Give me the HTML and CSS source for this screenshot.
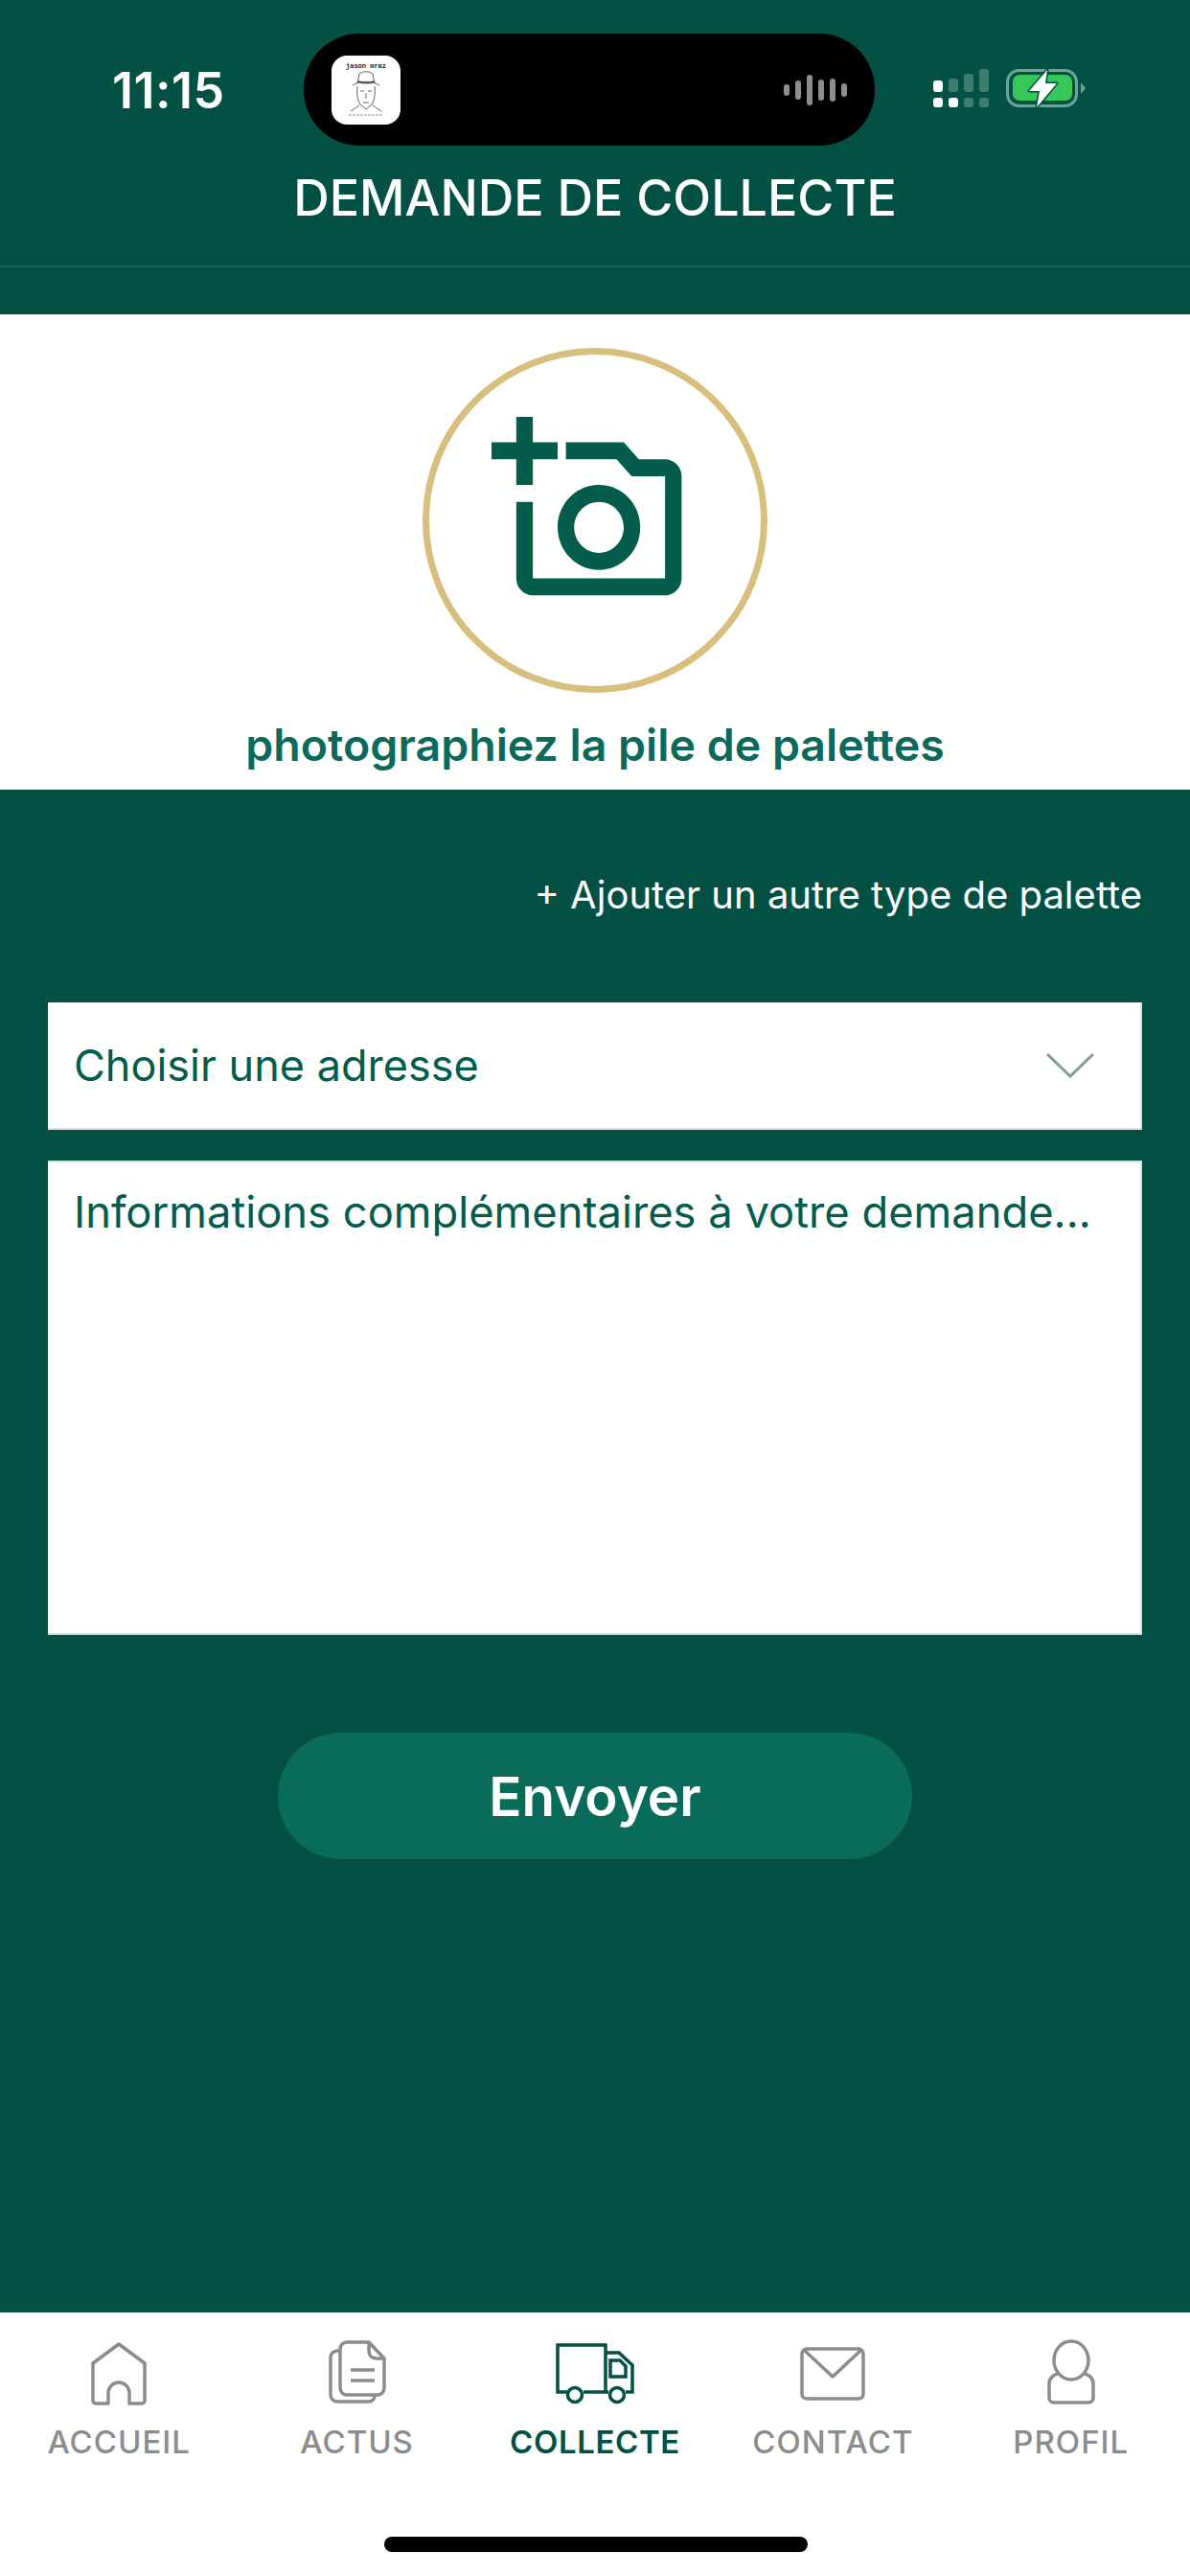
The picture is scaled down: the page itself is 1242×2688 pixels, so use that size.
FILE: index.html
```html
<!DOCTYPE html>
<html lang="fr">
<head>
    <meta charset="UTF-8">
    <meta name="viewport" content="width=device-width, initial-scale=1.0">
    <title>Demande de collecte</title>
    <link rel="stylesheet" href="styles.css">
</head>
<body>
    <div class="screen">
        <header class="top">
            <div class="status">
                <span class="time">11:15</span>
                <div class="island">
                    <div class="app-thumb">
                        <svg width="72" height="72" viewBox="0 0 72 72" fill="none" stroke="#555" stroke-width="0.9">
                            <text class="thumb-title" x="36" y="13" text-anchor="middle">jason mraz</text>
                            <path d="M27 29l2-10c4-3 10-3 14 0l2 10"/>
                            <path d="M22 31c8-5 20-5 28 0"/>
                            <path d="M27 27c6 2 12 2 18 0" stroke-width="2"/>
                            <path d="M27 32c-1 8 0 14 3 19l6 5 6-5c3-5 4-11 3-19"/>
                            <path d="M30 37h4M38 37h4M36 39v6M33 49h6"/>
                            <path d="M20 58l9-6M52 58l-9-6"/>
                            <path d="M18 62h36" stroke="#bbb" stroke-width="1.5" stroke-dasharray="3 1"/>
                        </svg>
                    </div>
                    <svg class="wave" width="66" height="32" viewBox="0 0 66 32">
                        <rect x="0" y="10" width="6" height="12" rx="3"/>
                        <rect x="12" y="6" width="6" height="20" rx="3"/>
                        <rect x="24" y="0" width="6" height="32" rx="3"/>
                        <rect x="36" y="5" width="6" height="22" rx="3"/>
                        <rect x="48" y="4" width="6" height="24" rx="3"/>
                        <rect x="60" y="9" width="6" height="14" rx="3"/>
                    </svg>
                </div>
                <div class="status-icons">
                    <svg width="58" height="40" viewBox="0 0 58 40">
                        <rect x="0" y="12" width="10" height="12" rx="3" fill="#fff"/>
                        <rect x="0" y="30" width="10" height="10" rx="3" fill="#fff"/>
                        <rect x="16" y="30" width="10" height="10" rx="3" fill="#fff"/>
                        <rect x="16" y="10" width="10" height="14" rx="3" fill="#3d7d6f"/>
                        <rect x="32" y="5" width="10" height="19" rx="3" fill="#3d7d6f"/>
                        <rect x="32" y="30" width="10" height="10" rx="3" fill="#3d7d6f"/>
                        <rect x="48" y="0" width="10" height="24" rx="3" fill="#3d7d6f"/>
                        <rect x="48" y="30" width="10" height="10" rx="3" fill="#3d7d6f"/>
                    </svg>
                    <svg width="83" height="41" viewBox="0 0 83 41">
                        <rect x="1.5" y="1.5" width="72" height="37" rx="12" fill="none" stroke="#6fa298" stroke-width="3"/>
                        <rect x="7" y="6" width="62" height="27" rx="7" fill="#37c759"/>
                        <path d="M78 14l5 6-5 6z" fill="#6fa298"/>
                        <path d="M43 1L24 23H35L32 40L53 15H41z" fill="#fff" stroke="#025144" stroke-width="3" stroke-linejoin="round" paint-order="stroke"/>
                    </svg>
                </div>
            </div>
            <h1 class="page-title">DEMANDE DE COLLECTE</h1>
        </header>

        <section class="photo-band">
            <div class="photo-circle">
                <svg class="camera" width="207" height="213" viewBox="0 0 24 24" preserveAspectRatio="none">
                    <path d="M21 6h-3.17L16 4H9v2h6.12l1.83 2H21v12H5v-9H3v9c0 1.1.9 2 2 2h16c1.1 0 2-.9 2-2V8c0-1.1-.9-2-2-2zM8 14c0 2.76 2.24 5 5 5s5-2.24 5-5-2.24-5-5-5-5 2.24-5 5zm5-3c1.65 0 3 1.35 3 3s-1.35 3-3 3-3-1.35-3-3 1.35-3 3-3zM5 9V6h3V4H5V1H3v3H0v2h3v3h2z"/>
                </svg>
            </div>
            <p class="photo-label">photographiez la pile de palettes</p>
        </section>

        <main class="form">
            <p class="add-type">+ Ajouter un autre type de palette</p>
            <div class="field select-field">
                <span>Choisir une adresse</span>
                <svg width="50" height="26" viewBox="0 0 50 26" fill="none" stroke="#7fa08f" stroke-width="3">
                    <path d="M1 1l24 23L49 1"/>
                </svg>
            </div>
            <div class="field text-field">Informations complémentaires à votre demande...</div>
            <button class="send">Envoyer</button>
        </main>

        <nav class="tabs">
            <div class="tab">
                <svg width="58" height="70" viewBox="0 -3 58 70" fill="none" stroke="currentColor" stroke-width="3.5" stroke-linejoin="round">
                    <path d="M2 22L29 2l27 20v39a3 3 0 0 1-3 3H40V53a11 11 0 0 0-22 0v11H5a3 3 0 0 1-3-3z"/>
                </svg>
                <span>ACCUEIL</span>
            </div>
            <div class="tab">
                <svg width="60" height="70" viewBox="0 -1 60 70" fill="none" stroke="currentColor" stroke-width="3.5" stroke-linejoin="round">
                    <path d="M48 57v1a6 6 0 0 1-6 6H9a7 7 0 0 1-7-7V18a7 7 0 0 1 7-7h3"/>
                    <path d="M19 2h23l16 17v31a7 7 0 0 1-7 7H19a7 7 0 0 1-7-7V9a7 7 0 0 1 7-7z"/>
                    <path d="M42 2v9c0 5 3 8 8 8h8"/>
                    <path d="M23 31h25M23 42h25"/>
                </svg>
                <span>ACTUS</span>
            </div>
            <div class="tab is-active">
                <svg width="82" height="70" viewBox="0 -4 82 70" fill="none" stroke="currentColor" stroke-width="3.5">
                    <path d="M12 51H2V2h50v49M29 51h26"/>
                    <path d="M52 10h14l14 13v28h-7"/>
                    <path d="M57 18h10l6 6v11H57z"/>
                    <circle cx="20" cy="54" r="7.5"/>
                    <circle cx="64" cy="54" r="7.5"/>
                </svg>
                <span>COLLECTE</span>
            </div>
            <div class="tab">
                <svg width="68" height="70" viewBox="0 -8 68 70" fill="none" stroke="currentColor" stroke-width="3.5" stroke-linejoin="round">
                    <rect x="2" y="2" width="64" height="52" rx="5"/>
                    <path d="M4 3l30 28L64 3"/>
                </svg>
                <span>CONTACT</span>
            </div>
            <div class="tab">
                <svg width="50" height="70" viewBox="0 0 50 70" fill="none" stroke="currentColor" stroke-width="3.5">
                    <ellipse cx="25" cy="22" rx="18" ry="20"/>
                    <path d="M11 36C6 37 2 41 2 46v15a5 5 0 0 0 5 5h36a5 5 0 0 0 5-5V46c0-5-4-9-9-10"/>
                </svg>
                <span>PROFIL</span>
            </div>
            <div class="home-bar"></div>
        </nav>
    </div>
</body>
</html>
```

FILE: styles.css
```css
* {
    box-sizing: border-box;
}

body {
    margin: 0;
    font-family: Inter, "Liberation Sans", sans-serif;
    background-color: #025144;
}

.screen {
    width: 1242px;
    height: 2688px;
    display: flex;
    flex-direction: column;
    overflow: hidden;
    background-color: #025144;
}

.top {
    height: 328px;
    flex-shrink: 0;
}

.status {
    height: 177px;
    padding: 35px 0 0 117px;
    display: flex;
    align-items: flex-start;
}

.time {
    width: 200px;
    margin-top: 30px;
    color: #fff;
    font-size: 52px;
    font-weight: 600;
    line-height: 60px;
    letter-spacing: 0.5px;
}

.island {
    width: 596px;
    height: 117px;
    padding: 22px 29px;
    display: flex;
    justify-content: space-between;
    align-items: center;
    background-color: #000;
    border-radius: 58px;
}

.app-thumb {
    width: 72px;
    height: 72px;
    background-color: #fff;
    border-radius: 16px;
    overflow: hidden;
}

.thumb-title {
    font-family: "Liberation Mono", monospace;
    font-size: 7px;
    font-weight: 700;
    fill: #222;
    stroke: none;
}

.wave {
    fill: #8e8e8e;
}

.status-icons {
    margin: 37px 0 0 61px;
    display: flex;
    gap: 18px;
}

.page-title {
    height: 102px;
    margin: 0;
    color: #fff;
    font-size: 52px;
    font-weight: 500;
    line-height: 60px;
    text-align: center;
    border-bottom: 2px solid #1c6356;
}

.photo-band {
    height: 496px;
    flex-shrink: 0;
    padding-top: 35px;
    display: flex;
    flex-direction: column;
    align-items: center;
    background-color: #fff;
}

.photo-circle {
    width: 360px;
    height: 360px;
    padding: 0 10px 21px 0;
    display: flex;
    justify-content: center;
    align-items: center;
    border: 7px solid #d8bf7e;
    border-radius: 50%;
}

.camera {
    fill: #045c4c;
}

.photo-label {
    margin: 27px 0 0;
    color: #0a6b5c;
    font-size: 46.5px;
    font-weight: 600;
    line-height: 54px;
}

.form {
    flex: 1;
    padding: 0 50px;
    display: flex;
    flex-direction: column;
}

.add-type {
    margin: 85px 0 0;
    height: 137px;
    color: #fff;
    font-size: 40px;
    line-height: 50px;
    text-align: right;
}

.field {
    color: #045c4c;
    font-size: 45px;
    background-color: #fff;
    border-right: 2px solid #ddd;
    border-bottom: 2px solid #ddd;
}

.select-field {
    height: 133px;
    padding: 0 48px 0 27px;
    display: flex;
    justify-content: space-between;
    align-items: center;
}

.text-field {
    height: 495px;
    margin-top: 32px;
    padding: 24px 27px;
    font-size: 45.3px;
    line-height: 56px;
    border-top: 2px solid #ddd;
}

.send {
    width: 662px;
    height: 132px;
    margin: 102px auto 0;
    color: #fff;
    font-family: inherit;
    font-size: 56.5px;
    font-weight: 600;
    background-color: #096c5b;
    border: none;
    border-radius: 66px;
}

.tabs {
    position: relative;
    height: 275px;
    flex-shrink: 0;
    padding-top: 28px;
    display: grid;
    grid-template-columns: repeat(5, 1fr);
    align-items: start;
    background-color: #fff;
}

.tab {
    display: flex;
    flex-direction: column;
    align-items: center;
    color: #8c8c8c;
    font-size: 33px;
    font-weight: 500;
    letter-spacing: 1px;
}

.tab svg {
    margin-bottom: 17px;
}

.tab span {
    line-height: 40px;
}

.tab.is-active {
    color: #025144;
    font-weight: 600;
    letter-spacing: 0.6px;
}

.home-bar {
    position: absolute;
    left: 401px;
    bottom: 25px;
    width: 442px;
    height: 16px;
    background-color: #000;
    border-radius: 8px;
}
```
